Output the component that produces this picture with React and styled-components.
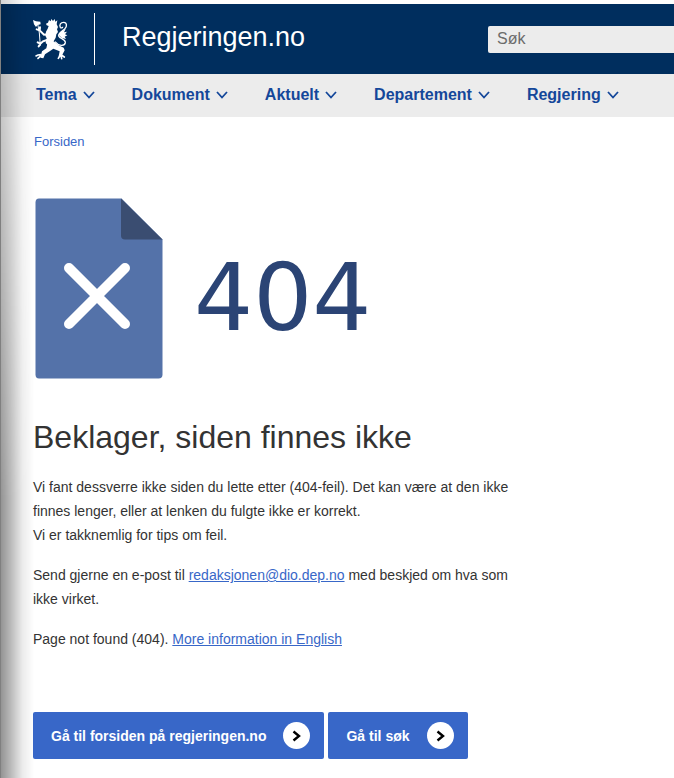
import React from "react";
import styled, { createGlobalStyle } from "styled-components";

const GlobalStyle = createGlobalStyle`
  *, *::before, *::after {
    box-sizing: border-box;
  }

  body {
    margin: 0;
    background-color: #ffffff;
    color: #333333;
    font-family: Arial, "Liberation Sans", sans-serif;
    font-size: 14px;
    line-height: 24px;
  }
`;

const Page = styled.div`
  position: relative;
  min-height: 100vh;
  padding-top: 4px;
`;

const EdgeShadow = styled.div`
  position: absolute;
  inset: 0 auto 0 0;
  width: 34px;
  border-left: 1px solid #808080;
  pointer-events: none;

  &::before {
    content: "";
    display: block;
    height: 100%;
    background: linear-gradient(
      to right,
      rgba(0, 0, 0, 0.42),
      rgba(0, 0, 0, 0.27) 30%,
      rgba(0, 0, 0, 0.08) 65%,
      rgba(0, 0, 0, 0)
    );
    mask-image: linear-gradient(to bottom, rgba(0, 0, 0, 0.4), #000000 500px);
  }
`;

const Header = styled.header`
  display: flex;
  align-items: center;
  height: 70px;
  padding-left: 33px;
  background-color: #002e5e;
`;

const Brand = styled.a`
  display: flex;
  align-items: center;
  color: #ffffff;
  font-size: 27px;
  text-decoration: none;
`;

const BrandName = styled.span`
  margin-left: 26px;
  padding: 0 0 4px 27px;
  border-left: 1px solid #ffffff;
  line-height: 48px;
`;

const SearchField = styled.input`
  width: 186px;
  height: 27px;
  margin-left: auto;
  padding: 0 9px;
  border: none;
  border-radius: 2px 0 0 2px;
  background-color: #ececec;
  color: #333333;
  font-family: inherit;
  font-size: 16px;

  &::placeholder {
    color: #6b6b6b;
    opacity: 1;
  }
`;

const Nav = styled.nav`
  display: flex;
  gap: 37px;
  height: 43px;
  padding: 0 36px;
  background-color: #ececec;
`;

const NavButton = styled.button`
  display: flex;
  align-items: center;
  gap: 6px;
  padding: 0 0 2px;
  border: none;
  background: none;
  color: #14479a;
  font-family: inherit;
  font-size: 16px;
  font-weight: bold;
  cursor: pointer;
`;

const Breadcrumb = styled.nav`
  padding: 13px 34px 0;
  font-size: 13px;

  a {
    color: #3867c8;
    text-decoration: none;
  }
`;

const Main = styled.main`
  padding: 44px 33px 19px;
`;

const Illustration = styled.div`
  display: flex;
  align-items: center;
  gap: 31px;
  padding-left: 2px;
`;

const ErrorCode = styled.div`
  padding-top: 18px;
  color: #2b4475;
  font-family: "DejaVu Sans", sans-serif;
  font-size: 93px;
  line-height: 100px;
`;

const Title = styled.h1`
  margin: 38px 0 18px;
  font-size: 32px;
  font-weight: normal;
  line-height: 40px;
`;

const Text = styled.p`
  max-width: 500px;
  margin: 0 0 16px;

  a {
    color: #3867c8;
  }
`;

const Actions = styled.div`
  display: flex;
  flex-wrap: wrap;
  gap: 4px;
  margin-top: 61px;
`;

const ActionLink = styled.a`
  display: flex;
  align-items: center;
  gap: 17px;
  height: 47px;
  padding: 0 14px 0 18px;
  border-radius: 2px;
  background-color: #3867c8;
  color: #ffffff;
  font-weight: bold;
  text-decoration: none;
`;

const ArrowCircle = styled.span`
  display: flex;
  align-items: center;
  justify-content: center;
  width: 27px;
  height: 27px;
  border-radius: 50%;
  background-color: #ffffff;
`;

const menuItems = ["Tema", "Dokument", "Aktuelt", "Departement", "Regjering"];

const Lion = () => (
  <svg width="35" height="41" viewBox="0 0 105 123" fill="#fff" aria-hidden="true">
    {/* axe */}
    <path d="M0 3l9 4 13 1 1 8-9 2-5 6-6-8z" />
    <path d="M14 14l5 28 3 38" stroke="#fff" strokeWidth="3" fill="none" />
    {/* crown, head and body */}
    <path d="M48 3l5 4 2-7 5 6 5-6 2 8 6-4-2 12 4 8-3 7 3 8-5 7-2 10-7 12-2 8-14 3-7-7 3-14-4-8 2-12 5-9 3-8-6-2-2-5 6-3z" />
    {/* front legs */}
    <path d="M46 46L33 47 20 34M20 34l-9-3M20 34l1-9M42 63l-12 4-9 8M22 74l-8-4M22 75l-5 7" fill="none" stroke="#fff" strokeWidth="6" strokeLinecap="round" />
    {/* hind legs */}
    <path d="M44 70l18-3 14 11 16 8 3 8-9 17-9 1 3-15-19-8-11 8-14 9-5 12-9-2 5-19 13-9z" />
    <path d="M24 107l-9 1-6 3M24 110l-9 8M82 108l-6 10M84 109l2 10M85 108l9 6" fill="none" stroke="#fff" strokeWidth="5" strokeLinecap="round" />
    {/* tail */}
    <path d="M66 68c10 13 29 15 31 3 1-8-8-10-17-16-10-8 8-19 15-25 8-7 7-20-3-20-9 0-14 8-10 15 2 3 7 2 7-2" fill="none" stroke="#fff" strokeWidth="4" />
    <path d="M77 45l9-8 12-7-5 10 9-2-6 8 7 3-8 4 4 7-12-3-7-6z" />
  </svg>
);

const Chevron = () => (
  <svg width="12" height="8" viewBox="0 0 12 8" fill="none" aria-hidden="true">
    <path d="M1 1l5 5.5L11 1" stroke="currentColor" strokeWidth="1.8" />
  </svg>
);

const DocumentIcon = () => (
  <svg width="128" height="181" viewBox="0 0 128 181" aria-hidden="true">
    <path d="M4 0.5h82.5L127.5 41.5V176.5q0 4-4 4H4q-3.5 0-3.5-4V4.5q0-4 3.5-4z" fill="#5472a9" />
    <path d="M86 0.5L127.5 41.5H90q-4 0-4-4z" fill="#3a4d71" />
    <path d="M34 70l56 56M90 70l-56 56" stroke="#fff" strokeWidth="10" strokeLinecap="round" />
  </svg>
);

const Arrow = () => (
  <svg width="9" height="12" viewBox="0 0 9 12" fill="none" aria-hidden="true">
    <path d="M1.5 1.5L7 6l-5.5 4.5" stroke="#000" strokeWidth="2.4" />
  </svg>
);

export default function App() {
  return (
    <>
      <GlobalStyle />
      <Page>
        <Header>
          <Brand href="#">
            <Lion />
            <BrandName>Regjeringen.no</BrandName>
          </Brand>
          <SearchField type="search" placeholder="Søk" aria-label="Søk" />
        </Header>
        <Nav>
          {menuItems.map((item) => (
            <NavButton key={item} type="button">
              {item}
              <Chevron />
            </NavButton>
          ))}
        </Nav>
        <Breadcrumb>
          <a href="#">Forsiden</a>
        </Breadcrumb>
        <Main>
          <Illustration>
            <DocumentIcon />
            <ErrorCode>404</ErrorCode>
          </Illustration>
          <Title>Beklager, siden finnes ikke</Title>
          <Text>
            Vi fant dessverre ikke siden du lette etter (404-feil). Det kan være at den ikke
            finnes lenger, eller at lenken du fulgte ikke er korrekt.
            <br />
            Vi er takknemlig for tips om feil.
          </Text>
          <Text>
            Send gjerne en e-post til{" "}
            <a href="mailto:redaksjonen@dio.dep.no">redaksjonen@dio.dep.no</a> med beskjed om
            hva som ikke virket.
          </Text>
          <Text>
            Page not found (404). <a href="#">More information in English</a>
          </Text>
          <Actions>
            <ActionLink href="#">
              Gå til forsiden på regjeringen.no
              <ArrowCircle>
                <Arrow />
              </ArrowCircle>
            </ActionLink>
            <ActionLink href="#">
              Gå til søk
              <ArrowCircle>
                <Arrow />
              </ArrowCircle>
            </ActionLink>
          </Actions>
        </Main>
        <EdgeShadow />
      </Page>
    </>
  );
}
